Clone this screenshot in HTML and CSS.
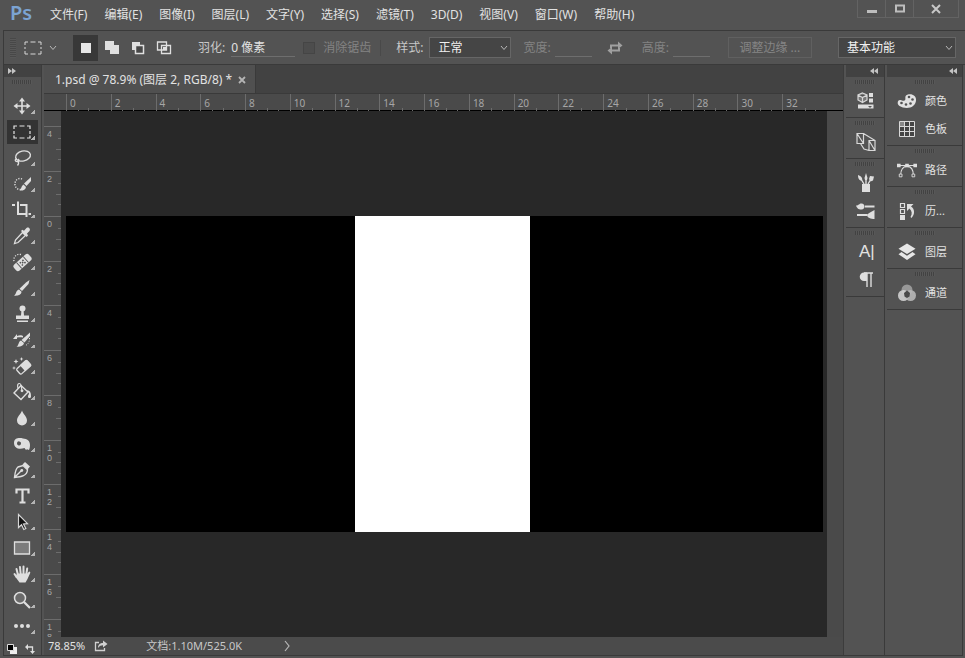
FILE: index.html
```html
<!DOCTYPE html>
<html lang="zh-CN">
<head>
    <meta charset="UTF-8">
    <meta name="viewport" content="width=device-width, initial-scale=1.0">
    <title>1.psd</title>
    <link rel="stylesheet" href="styles.css">
</head>
<body>
    <header class="menubar">
        <div class="logo">Ps</div>
        <nav class="menu">
            <button type="button">文件(F)</button>
            <button type="button">编辑(E)</button>
            <button type="button">图像(I)</button>
            <button type="button">图层(L)</button>
            <button type="button">文字(Y)</button>
            <button type="button">选择(S)</button>
            <button type="button">滤镜(T)</button>
            <button type="button">3D(D)</button>
            <button type="button">视图(V)</button>
            <button type="button">窗口(W)</button>
            <button type="button">帮助(H)</button>
        </nav>
        <div class="window-buttons">
            <button type="button" aria-label="最小化"><svg width="12" height="10" viewBox="0 0 12 10"><path d="M1 6h10v3H1z" fill="#bdbdbd"/></svg></button>
            <button type="button" aria-label="最大化"><svg width="12" height="10" viewBox="0 0 12 10"><path d="M2 1.500h8v6H2z" fill="none" stroke="#bdbdbd" stroke-width="2"/></svg></button>
            <button type="button" class="close" aria-label="关闭"><svg width="12" height="10" viewBox="0 0 12 10"><path d="M2 1l8 8M10 1L2 9" stroke="#c8c8c8" stroke-width="2"/></svg></button>
        </div>
    </header>

    <div class="options">
        <div class="grip-v"></div>
        <button type="button" class="preset" aria-label="工具预设">
            <svg width="18" height="14" viewBox="0 0 18 14"><path d="M1 4V1h3M6.500 1h5M14 1h3v3M17 6v2M17 10v3h-3M11.500 13h-5M4 13H1v-3M1 8V6" fill="none" stroke="#d8d8d8"/></svg>
            <svg width="8" height="6" viewBox="0 0 8 6"><path d="M1 1l3 3.500L7 1" fill="none" stroke="#b8b8b8"/></svg>
        </button>
        <div class="modes">
            <button type="button" class="active" aria-label="新选区"><svg width="16" height="16" viewBox="0 0 16 16"><path d="M3 3h10v10H3z" fill="#e6e6e6"/></svg></button>
            <button type="button" aria-label="添加到选区"><svg width="16" height="16" viewBox="0 0 16 16"><path d="M1 1h9v4h5v9H6v-4H1z" fill="#e0e0e0"/></svg></button>
            <button type="button" aria-label="从选区减去"><svg width="16" height="16" viewBox="0 0 16 16"><path d="M2 2h8v3H5v5H2z" fill="#e0e0e0"/><path d="M5.500 5.500h8v8h-8z" fill="#484848" stroke="#e0e0e0" stroke-width="1.500"/></svg></button>
            <button type="button" aria-label="与选区交叉"><svg width="16" height="16" viewBox="0 0 16 16"><path d="M1.500 2h9v8h-9zM5.500 5.500h9v8h-9z" fill="none" stroke="#e0e0e0" stroke-width="1.300"/><path d="M7 7h3v3H7z" fill="#e0e0e0"/></svg></button>
        </div>
        <div class="field feather">
            <label for="feather">羽化:</label>
            <input type="text" id="feather" value="0 像素">
        </div>
        <div class="field antialias">
            <input type="checkbox" id="antialias" disabled>
            <label for="antialias">消除锯齿</label>
        </div>
        <div class="field style">
            <label for="style">样式:</label>
            <span class="select">
                <select id="style"><option>正常</option></select>
                <svg width="8" height="6" viewBox="0 0 8 6"><path d="M1 1l3 3.500L7 1" fill="none" stroke="#b8b8b8"/></svg>
            </span>
        </div>
        <div class="field size">
            <label for="width">宽度:</label>
            <input type="text" id="width" disabled>
        </div>
        <button type="button" class="swap" aria-label="高度和宽度互换" disabled><svg width="16" height="14" viewBox="0 0 16 14"><path d="M3 3.500h8V.5l4.500 4L11 8V5.500H5V7H3zM13 10.500H5v3L.5 9.500 5 6v2.500h6V7h2z" fill="#a0a0a0"/></svg></button>
        <div class="field size">
            <label for="height">高度:</label>
            <input type="text" id="height" disabled>
        </div>
        <button type="button" class="refine" disabled>调整边缘 ...</button>
        <span class="select workspace">
            <select aria-label="工作区"><option>基本功能</option></select>
            <svg width="8" height="6" viewBox="0 0 8 6"><path d="M1 1l3 3.500L7 1" fill="none" stroke="#b8b8b8"/></svg>
        </span>
    </div>

    <div class="main">
        <aside class="tools">
            <div class="panel-head left"><svg width="8" height="6" viewBox="0 0 8 6"><path d="M0 0l4 3-4 3zM4 0l4 3-4 3z" fill="#c4c4c4"/></svg></div>
            <div class="grip"></div>
            <div class="tool-list">
                <button type="button" aria-label="移动"><svg viewBox="0 0 20 20"><path d="M10 3v14M3 10h14" stroke="#dedede" stroke-width="1.600"/><path d="M10 1.500l3 4H7zM10 18.500l3-4H7zM1.500 10l4-3v6zM18.500 10l-4-3v6z" fill="#dedede"/></svg></button>
                <button type="button" class="active" aria-label="矩形选框"><svg viewBox="0 0 20 20"><path d="M2 7V4h3M7.500 4h5M15 4h3v3M18 9v3M18 13.500V16h-3M12.500 16h-5M5 16H2v-2.500M2 12V9" fill="none" stroke="#e4e4e4" stroke-width="1.200"/></svg></button>
                <button type="button" aria-label="套索"><svg viewBox="0 0 20 20"><ellipse cx="11" cy="8" rx="7.500" ry="5" transform="rotate(-12 11 8)" fill="none" stroke="#dedede" stroke-width="1.400"/><path d="M4.500 10.500c-2 1-1.500 3 .5 3s3-1.500 1-2.500M6 13.500c1 1 1 2-.5 4" fill="none" stroke="#dedede" stroke-width="1.300"/></svg></button>
                <button type="button" aria-label="快速选择"><svg viewBox="0 0 20 20"><path d="M10 5a5 5.500 0 1 0 0 10" fill="none" stroke="#dedede" stroke-width="1.400" stroke-dasharray="1.200 1.400"/><path d="M19 3v4l-4.500 5-2.500-2.500z" fill="#dedede"/><path d="M11.500 10.500l2.500 2.500c-.5 3-3.500 4-6.500 3.500 2-1 1.500-4.500 4-6z" fill="#dedede"/></svg></button>
                <button type="button" aria-label="裁剪"><svg viewBox="0 0 20 20"><path d="M6 1.500V14h9M0 5h3M8 5h6.500v12M16.500 14H19" fill="none" stroke="#dedede" stroke-width="2"/></svg></button>
                <button type="button" aria-label="吸管"><svg viewBox="0 0 20 20"><path d="M10.500 6.500l3 3-7.500 7-3.500 1 1-3.500z" fill="none" stroke="#dedede" stroke-width="1.300"/><path d="M9 5l1.300-1.300 1.700 1L14.500 2c2-1.500 4.500 1 3 3L15 7.500l1 2L14.700 11z" fill="#dedede"/></svg></button>
                <button type="button" aria-label="污点修复画笔"><svg viewBox="0 0 20 20"><path d="M9 2.500c-4-1-8 2-7 7" fill="none" stroke="#dedede" stroke-width="1.300" stroke-dasharray="1.200 1.400"/><g transform="rotate(-42 10.500 10.500)"><rect x="0.500" y="6.500" width="20" height="8" rx="2.500" fill="#dedede"/><path d="M6 6.500v8M15 6.500v8" stroke="#535353"/><path d="M8 8.500h1.500v1.500H8zM11.500 8.500H13v1.500h-1.500zM8 11.500h1.500V13H8zM11.500 11.500H13V13h-1.500zM9.800 10h1.500v1.500H9.800z" fill="#535353"/></g></svg></button>
                <button type="button" aria-label="画笔"><svg viewBox="0 0 20 20"><path d="M17.500 2l-1 4-6.500 7-2.500-2.200 6.500-6.300z" fill="#dedede"/><path d="M7 11.500l2.500 2.300c0 3-4 4.500-7.500 3.700 2.500-1 1.500-5 5-6z" fill="#dedede"/></svg></button>
                <button type="button" aria-label="仿制图章"><svg viewBox="0 0 20 20"><circle cx="10.500" cy="4.500" r="3" fill="#dedede"/><path d="M9.500 6h2l.5 5.500h5V15H4v-3.500h5zM5 16.500h11V18H5z" fill="#dedede"/></svg></button>
                <button type="button" aria-label="历史记录画笔"><svg viewBox="0 0 20 20"><path d="M1 9l4-5v2c2-1 5-1 6 0v1.500c-2-.5-4-.5-6 0V9z" fill="#dedede"/><path d="M18 2.500V6l-5.500 6.500L9.500 10z" fill="#dedede"/><path d="M9 10.500l3 2.500c-.5 3-4 4.200-7.500 3.700 2.500-1 1.500-5 4.500-6.200z" fill="#dedede"/><path d="M17.500 8c0 4-1 6-4 7.500" fill="none" stroke="#dedede" stroke-dasharray="1 1.500"/></svg></button>
                <button type="button" aria-label="橡皮擦"><svg viewBox="0 0 20 20"><g transform="rotate(-42 12 11)"><rect x="4.500" y="7.500" width="14" height="7" rx="1.500" fill="#535353" stroke="#dedede" stroke-width="1.300"/><path d="M10 7h7.500q1.500 0 1.500 1.500v5q0 1.500-1.500 1.500H10z" fill="#dedede"/></g><path d="M4 3l.7 1.800L6.500 5.500l-1.800.7L4 8l-.7-1.800L1.500 5.500l1.800-.7zM9.500 1l.6 1.400 1.400.6-1.400.6L9.500 5l-.6-1.400L7.500 3l1.400-.6zM2 10l.5 1.500L4 12l-1.500.5L2 14l-.5-1.500L0 12l1.500-.5z" fill="#dedede"/></svg></button>
                <button type="button" aria-label="油漆桶"><svg viewBox="0 0 20 20"><path d="M9 3.500l7 6.500-7 7.500L2 11z" fill="none" stroke="#dedede" stroke-width="1.400"/><path d="M6 6.500c-1-4 0-5 1.500-5S9.500 4 9.800 8" fill="none" stroke="#dedede" stroke-width="1.200"/><circle cx="10" cy="8.800" r="1.400" fill="#dedede"/><path d="M15 8c4 1 4 4 4 6.500 0 2-3 2-3 0 0-1.500 1-2 1-3z" fill="#dedede"/></svg></button>
                <button type="button" aria-label="模糊"><svg viewBox="0 0 20 20"><path d="M10 2.500c1 3.500 5 6 5 10a5 5 0 0 1-10 0C5 8.500 9 6 10 2.500z" fill="#dedede"/></svg></button>
                <button type="button" aria-label="减淡"><svg viewBox="0 0 20 20"><path d="M2 9c0-5 5-5.500 9-4.500 4 .5 7 2 7 6.500 0 2-.5 4-1 5l-2-.8-1 .8-1.500-2C7 16 2 14 2 9zm3 0a2 2 0 1 0 4 .8A2 2 0 0 0 5 9z" fill="#dedede" fill-rule="evenodd"/></svg></button>
                <button type="button" aria-label="钢笔"><svg viewBox="0 0 20 20"><path d="M2.500 17.500c.5-5 1.500-9 3.500-10.500l5-1.500 4.500 4.300c-.5 6-6 7.200-13 7.700zM3 17l6.500-6.500" fill="none" stroke="#dedede" stroke-width="1.400"/><circle cx="9.800" cy="10.500" r="1.400" fill="#dedede"/><path d="M10.500 4.500l2.500-2.500 5 4.500-2.500 3z" fill="#dedede"/></svg></button>
                <button type="button" aria-label="文字"><svg viewBox="0 0 20 20"><path d="M4.500 7.500V3.500h12v4M10.500 3.500v13M7.500 16.500h6" fill="none" stroke="#dedede" stroke-width="2.200"/></svg></button>
                <button type="button" aria-label="路径选择"><svg viewBox="0 0 20 20"><path d="M6.500 2.500v13l3-2.800 2.300 4.800 2-1-2.300-4.500 4-.3z" fill="#111" stroke="#d6d6d6" stroke-width="1.200"/></svg></button>
                <button type="button" aria-label="矩形"><svg viewBox="0 0 20 20"><path d="M2.500 4h15v12h-15z" fill="#7c7c7c" stroke="#dedede" stroke-width="1.300"/></svg></button>
                <button type="button" aria-label="抓手"><svg viewBox="0 0 20 20"><path d="M6 11L4.500 5M8.700 10L8 3M11.500 10V2.500M14.200 11l1-6.500M4.500 13L2.500 10" stroke="#dedede" stroke-width="2" stroke-linecap="round"/><path d="M5 9.500h10.200l2-2q1.500 0 1 1.500L15.500 15l-2 3.500h-6L3.500 13z" fill="#dedede"/></svg></button>
                <button type="button" aria-label="缩放"><svg viewBox="0 0 20 20"><circle cx="8" cy="8" r="5.500" fill="#6a6a6a" stroke="#dedede" stroke-width="1.500"/><path d="M12 12l6 6" stroke="#dedede" stroke-width="2.300"/></svg></button>
                <button type="button" aria-label="编辑工具栏"><svg viewBox="0 0 20 20"><circle cx="4" cy="10" r="2" fill="#dedede"/><circle cx="10" cy="10" r="2" fill="#dedede"/><circle cx="16" cy="10" r="2" fill="#dedede"/></svg></button>
            </div>
            <div class="swatches">
                <button type="button" aria-label="默认前景色和背景色"><svg width="10" height="10" viewBox="0 0 10 10"><path d="M3 3h7v7H3z" fill="#eee"/><path d="M.5.500h6v6h-6z" fill="#000" stroke="#ddd"/></svg></button>
                <button type="button" aria-label="切换前景色和背景色"><svg width="10" height="10" viewBox="0 0 10 10"><path d="M2 3h5.500v5" fill="none" stroke="#dedede" stroke-width="1.300"/><path d="M0 3l3-3v6zM7.500 10l-2.500-3h5z" fill="#dedede"/></svg></button>
            </div>
        </aside>

        <main class="document">
            <div class="tabs">
                <div class="tab">
                    <span>1.psd @ 78.9% (图层 2, RGB/8) *</span>
                    <button type="button" aria-label="关闭文档"><svg width="8" height="8" viewBox="0 0 8 8"><path d="M1 1l6 6M7 1L1 7" stroke="#b4b4b4" stroke-width="1.800"/></svg></button>
                </div>
            </div>
            <div class="ruler-h">
                <span>0</span><span>2</span><span>4</span><span>6</span><span>8</span><span>10</span><span>12</span><span>14</span><span>16</span><span>18</span><span>20</span><span>22</span><span>24</span><span>26</span><span>28</span><span>30</span><span>32</span>
            </div>
            <div class="view">
                <div class="ruler-v">
                    <span>4</span><span>2</span><span>0</span><span>2</span><span>4</span><span>6</span><span>8</span><span>1<br>0</span><span>1<br>2</span><span>1<br>4</span><span>1<br>6</span><span>1<br>8</span>
                </div>
                <div class="canvas">
                    <div class="artwork"><div class="layer"></div></div>
                </div>
                <div class="scroll"></div>
            </div>
            <footer class="status">
                <span class="zoom">78.85%</span>
                <svg class="share" width="14" height="12" viewBox="0 0 14 12"><path d="M5 2.500H1.500v8h9V8" fill="none" stroke="#d0d0d0" stroke-width="1.300"/><path d="M4 8c0-3.500 2-5 5-5V.5L13.500 4 9 7.500V5.300C7 5.300 5.500 6 4 8z" fill="#d0d0d0"/></svg>
                <span class="doc-size">文档:1.10M/525.0K</span>
                <svg width="6" height="12" viewBox="0 0 6 12"><path d="M1 1l4 5-4 5" fill="none" stroke="#b8b8b8" stroke-width="1.200"/></svg>
            </footer>
        </main>

        <aside class="dock icons">
            <div class="panel-head"><svg width="8" height="6" viewBox="0 0 8 6"><path d="M4 0L0 3l4 3zM8 0L4 3l4 3z" fill="#c4c4c4"/></svg></div>
            <div class="group">
                <div class="grip"></div>
                <button type="button" aria-label="属性"><svg viewBox="0 0 20 20"><path d="M6.500 2l4.500 2v5l-4.500 2.500L2 9V4zM2 4l4.500 2.500L11 4M6.500 6.500v5" fill="#777" stroke="#d8d8d8" stroke-width="1.200"/><path d="M13 2h4v4h-4zM13 7.500h4v4h-4z" fill="#dedede"/><path d="M2 13.500h15.500v4H2z" fill="#dedede"/><path d="M12 15h4l-2 2z" fill="#555"/></svg></button>
            </div>
            <div class="group">
                <div class="grip"></div>
                <button type="button" aria-label="仿制源"><svg viewBox="0 0 20 20"><path d="M1 1.500h6.500v10H1zM13 8.500h6v10h-6zM1 1.500l6.500 10M7.500 1.500L19 8.500M1 11.500l3.500 0L8 17l5 1.500M13 8.500l6 10" fill="none" stroke="#d8d8d8" stroke-width="1.200"/></svg></button>
            </div>
            <div class="group">
                <div class="grip"></div>
                <button type="button" aria-label="画笔预设"><svg viewBox="0 0 20 20"><path d="M6 11h8v8H6z" fill="#dedede"/><path d="M8 11L5 6M10 11V5M12 11l3-5" stroke="#dedede" stroke-width="1.400"/><path d="M2 2c3 1 5 3 4 5.500C3 8 2 5 2 2zM8.500 5L10 0l1.500 5-.5 2H9zM13 6l1-3 4 .5-1 4-2.500 1z" fill="#dedede"/></svg></button>
                <button type="button" aria-label="画笔"><svg viewBox="0 0 20 20"><path d="M9 5.500h9.500M1 14h10" stroke="#dedede" stroke-width="1.800"/><path d="M0 4.500c3 0 3-2 5.500-2 2 0 3 1.500 3 3s-1 3-3 3C2 8.500 1 7 0 4.500zM11 13.500c1-1 2-1 3-2l4.500-2.500v9C15 18 11 17 11 13.500z" fill="#dedede"/></svg></button>
            </div>
            <div class="group">
                <div class="grip"></div>
                <button type="button" class="char" aria-label="字符">A|</button>
                <button type="button" aria-label="段落"><svg viewBox="0 0 20 20"><path d="M11 2.500H8a4.200 4.200 0 0 0 0 8.500h3z" fill="#dedede"/><path d="M8 3h9M11 3v14M15 3v14" fill="none" stroke="#dedede" stroke-width="1.400"/></svg></button>
            </div>
        </aside>

        <aside class="dock labels">
            <div class="panel-head"><svg width="8" height="6" viewBox="0 0 8 6"><path d="M4 0L0 3l4 3zM8 0L4 3l4 3z" fill="#c4c4c4"/></svg></div>
            <div class="group">
                <div class="grip"></div>
                <button type="button"><svg viewBox="0 0 20 20"><path d="M9 4.500c2-1.500 6-2 8.500.5s2 7-1.500 10-10 2.200-13.500 0c-3-2-2-6.500 1-6 1.500.3 2.500 1.200 4 .5 1.800-1 0-3.500 1.500-5z" fill="#e2e2e2"/><g fill="#535353"><circle cx="4.500" cy="12" r="1.300"/><circle cx="9" cy="13.500" r="1.300"/><circle cx="13.500" cy="12.500" r="1.300"/><circle cx="15.500" cy="8.500" r="1.300"/><circle cx="12" cy="6" r="1.300"/></g></svg>颜色</button>
                <button type="button"><svg viewBox="0 0 20 20"><path d="M2.500 2.500h15v15h-15z" fill="#444"/><path d="M2.500 2.500h5v5h-5z" fill="#888"/><path d="M2.500 2.500h15v15h-15zM7.500 2.500v15M12.500 2.500v15M2.500 7.500h15M2.500 12.500h15" fill="none" stroke="#d8d8d8"/></svg>色板</button>
            </div>
            <div class="group">
                <div class="grip"></div>
                <button type="button"><svg viewBox="0 0 22 20"><path d="M2 5h18M4 16c0-7 3-10 7-10s7 3 7 10" fill="none" stroke="#dedede" stroke-width="1.200"/><path d="M0 3h4v4H0zM9 3h4v4H9zM18 3h4v4h-4z" fill="#dedede"/><path d="M2.500 14.500h3v3h-3zM16.500 14.500h3v3h-3z" fill="#535353" stroke="#dedede"/></svg>路径</button>
            </div>
            <div class="group">
                <div class="grip"></div>
                <button type="button"><svg viewBox="0 0 20 20"><path d="M3.500 2.500h4v4h-4zM3.500 8.500h4v4h-4z" fill="none" stroke="#dedede" stroke-width="1.200"/><path d="M3 14h5v5H3z" fill="#dedede"/><path d="M10 3h6.500L14 5.500c4 2.500 4 8 .5 11.500l-1-1c2-3 1.500-6-1-8.500L10 10z" fill="#dedede"/></svg>历...</button>
            </div>
            <div class="group">
                <div class="grip"></div>
                <button type="button"><svg viewBox="0 0 20 20"><path d="M10 1.500l8.500 5.300L10 12 1.500 6.800z" fill="#e6e6e6"/><path d="M1.500 12.200L4.500 10l5.500 3.800 5.500-3.800 3 2.200L10 18z" fill="#e6e6e6"/></svg>图层</button>
            </div>
            <div class="group">
                <div class="grip"></div>
                <button type="button"><svg viewBox="0 0 20 20"><circle cx="10" cy="7" r="5.500" fill="#989898"/><circle cx="6.500" cy="12.500" r="5.500" fill="#d2d2d2" fill-opacity=".9"/><circle cx="13.500" cy="12.500" r="5.500" fill="#b8b8b8" fill-opacity=".9"/><path d="M10 7.500l3 2.500-.5 3.500L10 15l-2.500-1.500L7 10z" fill="#4a4a4a"/></svg>通道</button>
            </div>
        </aside>
    </div>
</body>
</html>
```

FILE: styles.css
```css
* {
    box-sizing: border-box;
}
body {
    display: flex;
    flex-direction: column;
    height: 100vh;
    margin: 0;
    overflow: hidden;
    background-color: #535353;
    color: #e2e2e2;
    font-family: "Noto Sans", "Noto Sans CJK SC", sans-serif;
    font-size: 12px;
    line-height: 16px;
}
button, input, select {
    margin: 0;
    padding: 0;
    border: 0;
    background: none;
    color: inherit;
    font: inherit;
}
svg {
    display: block;
    flex: none;
}

/* menu */
.menubar {
    display: flex;
    flex: none;
    height: 30px;
    padding-right: 6px;
}
.logo {
    width: 42px;
    padding-left: 10px;
    color: #7ba3d2;
    font-size: 20px;
    font-weight: 600;
    line-height: 26px;
}
.menu {
    display: flex;
    flex: 1;
    align-items: center;
    gap: 1px;
}
.menu button {
    padding: 0 8px;
    white-space: nowrap;
}
.window-buttons {
    display: flex;
    height: 18px;
    border: 1px solid #636363;
    border-top: 0;
}
.window-buttons button {
    display: flex;
    justify-content: center;
    width: 28px;
    padding-top: 4px;
    border-right: 1px solid #636363;
}
.window-buttons .close {
    width: 44px;
    border-right: 0;
}

/* options bar */
.options {
    display: flex;
    flex: none;
    align-items: center;
    height: 35px;
    margin-left: 3px;
    padding: 0 9px 0 6px;
    border: 1px solid #3a3a3a;
    border-right: 0;
    white-space: nowrap;
}
.grip-v {
    width: 6px;
    height: 20px;
    background: repeating-linear-gradient(#484848 0 1px, #585858 1px 2px);
}
.preset {
    display: flex;
    align-items: center;
    gap: 7px;
    margin: 0 16px 0 8px;
}
.modes {
    display: flex;
    gap: 1px;
}
.modes button {
    display: grid;
    place-items: center;
    width: 25px;
    height: 26px;
}
.modes .active {
    background-color: #383838;
}
.field {
    display: flex;
    align-items: center;
}
.field label {
    color: #c8c8c8;
}
.field input[type="text"] {
    height: 18px;
    border-bottom: 1px solid #6e6e6e;
}
.feather {
    gap: 6px;
    margin-left: 22px;
}
.feather input {
    width: 64px;
}
.antialias {
    gap: 8px;
    margin-left: 8px;
    padding-right: 9px;
    border-right: 1px solid #494949;
}
.antialias input {
    appearance: none;
    width: 12px;
    height: 12px;
    border: 1px solid #454545;
    background-color: #4d4d4d;
}
.field.antialias label, .size label {
    color: #838383;
}
.style {
    gap: 6px;
    margin-left: 15px;
}
.select {
    position: relative;
}
.select select {
    appearance: none;
    display: block;
    width: 82px;
    height: 21px;
    padding-left: 8px;
    border: 1px solid #666;
    background-color: #454545;
    color: #f0f0f0;
}
.select svg {
    position: absolute;
    top: 8px;
    right: 3px;
    pointer-events: none;
}
.size {
    gap: 4px;
    margin-left: 12px;
}
.size input {
    width: 37px;
}
.swap {
    margin: 0 7px 0 15px;
}
.refine {
    width: 84px;
    height: 21px;
    margin-left: 18px;
    border: 1px solid #606060;
    color: #858585;
}
.workspace {
    margin-left: auto;
}
.workspace select {
    width: 118px;
}

/* main area */
.main {
    display: flex;
    flex: 1;
    min-height: 0;
    margin: 0 2px 2px 3px;
    border: 1px solid #3a3a3a;
    border-top: 0;
}
.panel-head {
    display: flex;
    flex: none;
    align-items: center;
    justify-content: flex-end;
    height: 12px;
    padding-right: 5px;
    background-color: #424242;
}
.panel-head.left {
    justify-content: flex-start;
    padding-left: 4px;
}
.grip {
    width: 20px;
    height: 4px;
    background: repeating-linear-gradient(90deg, #424242 0 1px, #585858 1px 2px);
}
.tools {
    display: flex;
    flex: none;
    flex-direction: column;
    width: 38px;
    overflow: hidden;
    border-right: 1px solid #3c3c3c;
}
.tools .grip {
    flex: none;
    margin: 3px 8px 9px;
}
.tool-list {
    display: flex;
    flex-direction: column;
    padding: 0 3px;
}
.tool-list button {
    display: flex;
    height: 26px;
    padding: 3px 5px;
    border: solid #535353;
    border-width: 1px 0;
    background: linear-gradient(135deg, transparent 50%, #b4b4b4 50%) no-repeat right 3px bottom 4px / 4px 4px;
}
.tool-list svg {
    width: 20px;
    height: 20px;
    margin-top: -1px;
}
.tool-list .active {
    background-color: #333;
}
.swatches {
    display: flex;
    gap: 8px;
    padding: 5px 3px 0;
}

/* document */
.document {
    display: flex;
    flex: 1;
    flex-direction: column;
    min-width: 0;
    margin-left: 2px;
    border-right: 1px solid #3c3c3c;
}
.tabs {
    display: flex;
    flex: none;
    height: 29px;
    border-bottom: 1px solid #3a3a3a;
    background-color: #424242;
}
.tab {
    display: flex;
    align-items: center;
    gap: 6px;
    padding: 2px 9px 0 11px;
    border-right: 1px solid #3a3a3a;
    background-color: #505050;
    white-space: nowrap;
}
.ruler-h {
    display: grid;
    flex: none;
    grid-template-columns: repeat(17, 1fr);
    height: 17px;
    padding: 0 16px 0 22px;
    border-bottom: 1px solid #000;
    background-color: #4a4a4a;
    color: #a6a6a6;
    font-size: 10px;
    line-height: 19px;
}
.ruler-h span {
    padding-left: 3px;
    border-left: 1px solid #6c6c6c;
    background:
        linear-gradient(#6c6c6c, #6c6c6c) no-repeat 50% 100% / 1px 5px,
        linear-gradient(#6c6c6c, #6c6c6c) no-repeat 25% 100% / 1px 3px,
        linear-gradient(#6c6c6c, #6c6c6c) no-repeat 75% 100% / 1px 3px;
}
.view {
    display: flex;
    flex: 1;
    min-height: 0;
}
.ruler-v {
    display: grid;
    flex: none;
    grid-template-rows: repeat(3, 45px 45px 45px 44px);
    width: 17px;
    padding-top: 15px;
    overflow: hidden;
    background-color: #4a4a4a;
    color: #a6a6a6;
    font-family: "Liberation Sans", sans-serif;
    font-size: 9px;
    line-height: 10px;
}
.ruler-v span {
    padding: 2px 0 0 3px;
    border-top: 1px solid #6c6c6c;
    background:
        linear-gradient(#6c6c6c, #6c6c6c) no-repeat 100% 50% / 5px 1px,
        linear-gradient(#6c6c6c, #6c6c6c) no-repeat 100% 25% / 3px 1px,
        linear-gradient(#6c6c6c, #6c6c6c) no-repeat 100% 75% / 3px 1px;
}
.canvas {
    display: flex;
    flex: 1;
    align-items: center;
    padding: 0 4px 0 5px;
    background-color: #282828;
}
.artwork {
    display: grid;
    flex: 1;
    grid-template-columns: 289fr 175fr 293fr;
    aspect-ratio: 757 / 316;
    background-color: #000;
}
.layer {
    grid-column: 2;
    background-color: #fff;
}
.scroll {
    width: 16px;
    background-color: #4a4a4a;
}
.status {
    display: flex;
    flex: none;
    align-items: center;
    height: 18px;
    padding-left: 4px;
    background-color: #4b4b4b;
    color: #c8c8c8;
    font-size: 11px;
}
.zoom {
    color: #e2e2e2;
}
.share {
    margin: 0 38px 0 9px;
}
.doc-size {
    margin-right: 42px;
}

/* panels */
.dock {
    flex: none;
    margin-left: 2px;
}
.dock.icons {
    width: 39px;
    border-right: 1px solid #3a3a3a;
}
.icons .panel-head {
    padding-right: 6px;
}
.dock.labels {
    width: 75px;
}
.group {
    padding: 3px 0 2px;
    border-bottom: 1px solid #3a3a3a;
}
.group .grip {
    margin: 0 auto 3px;
}
.group button {
    display: flex;
    align-items: center;
    width: 100%;
    height: 28px;
    padding-left: 10px;
    font-size: 11px;
}
.group svg {
    width: 20px;
    height: 20px;
}
.labels button {
    gap: 8px;
}
.group .char {
    padding-left: 13px;
    font-family: "Liberation Sans", sans-serif;
    font-size: 17px;
}
```
